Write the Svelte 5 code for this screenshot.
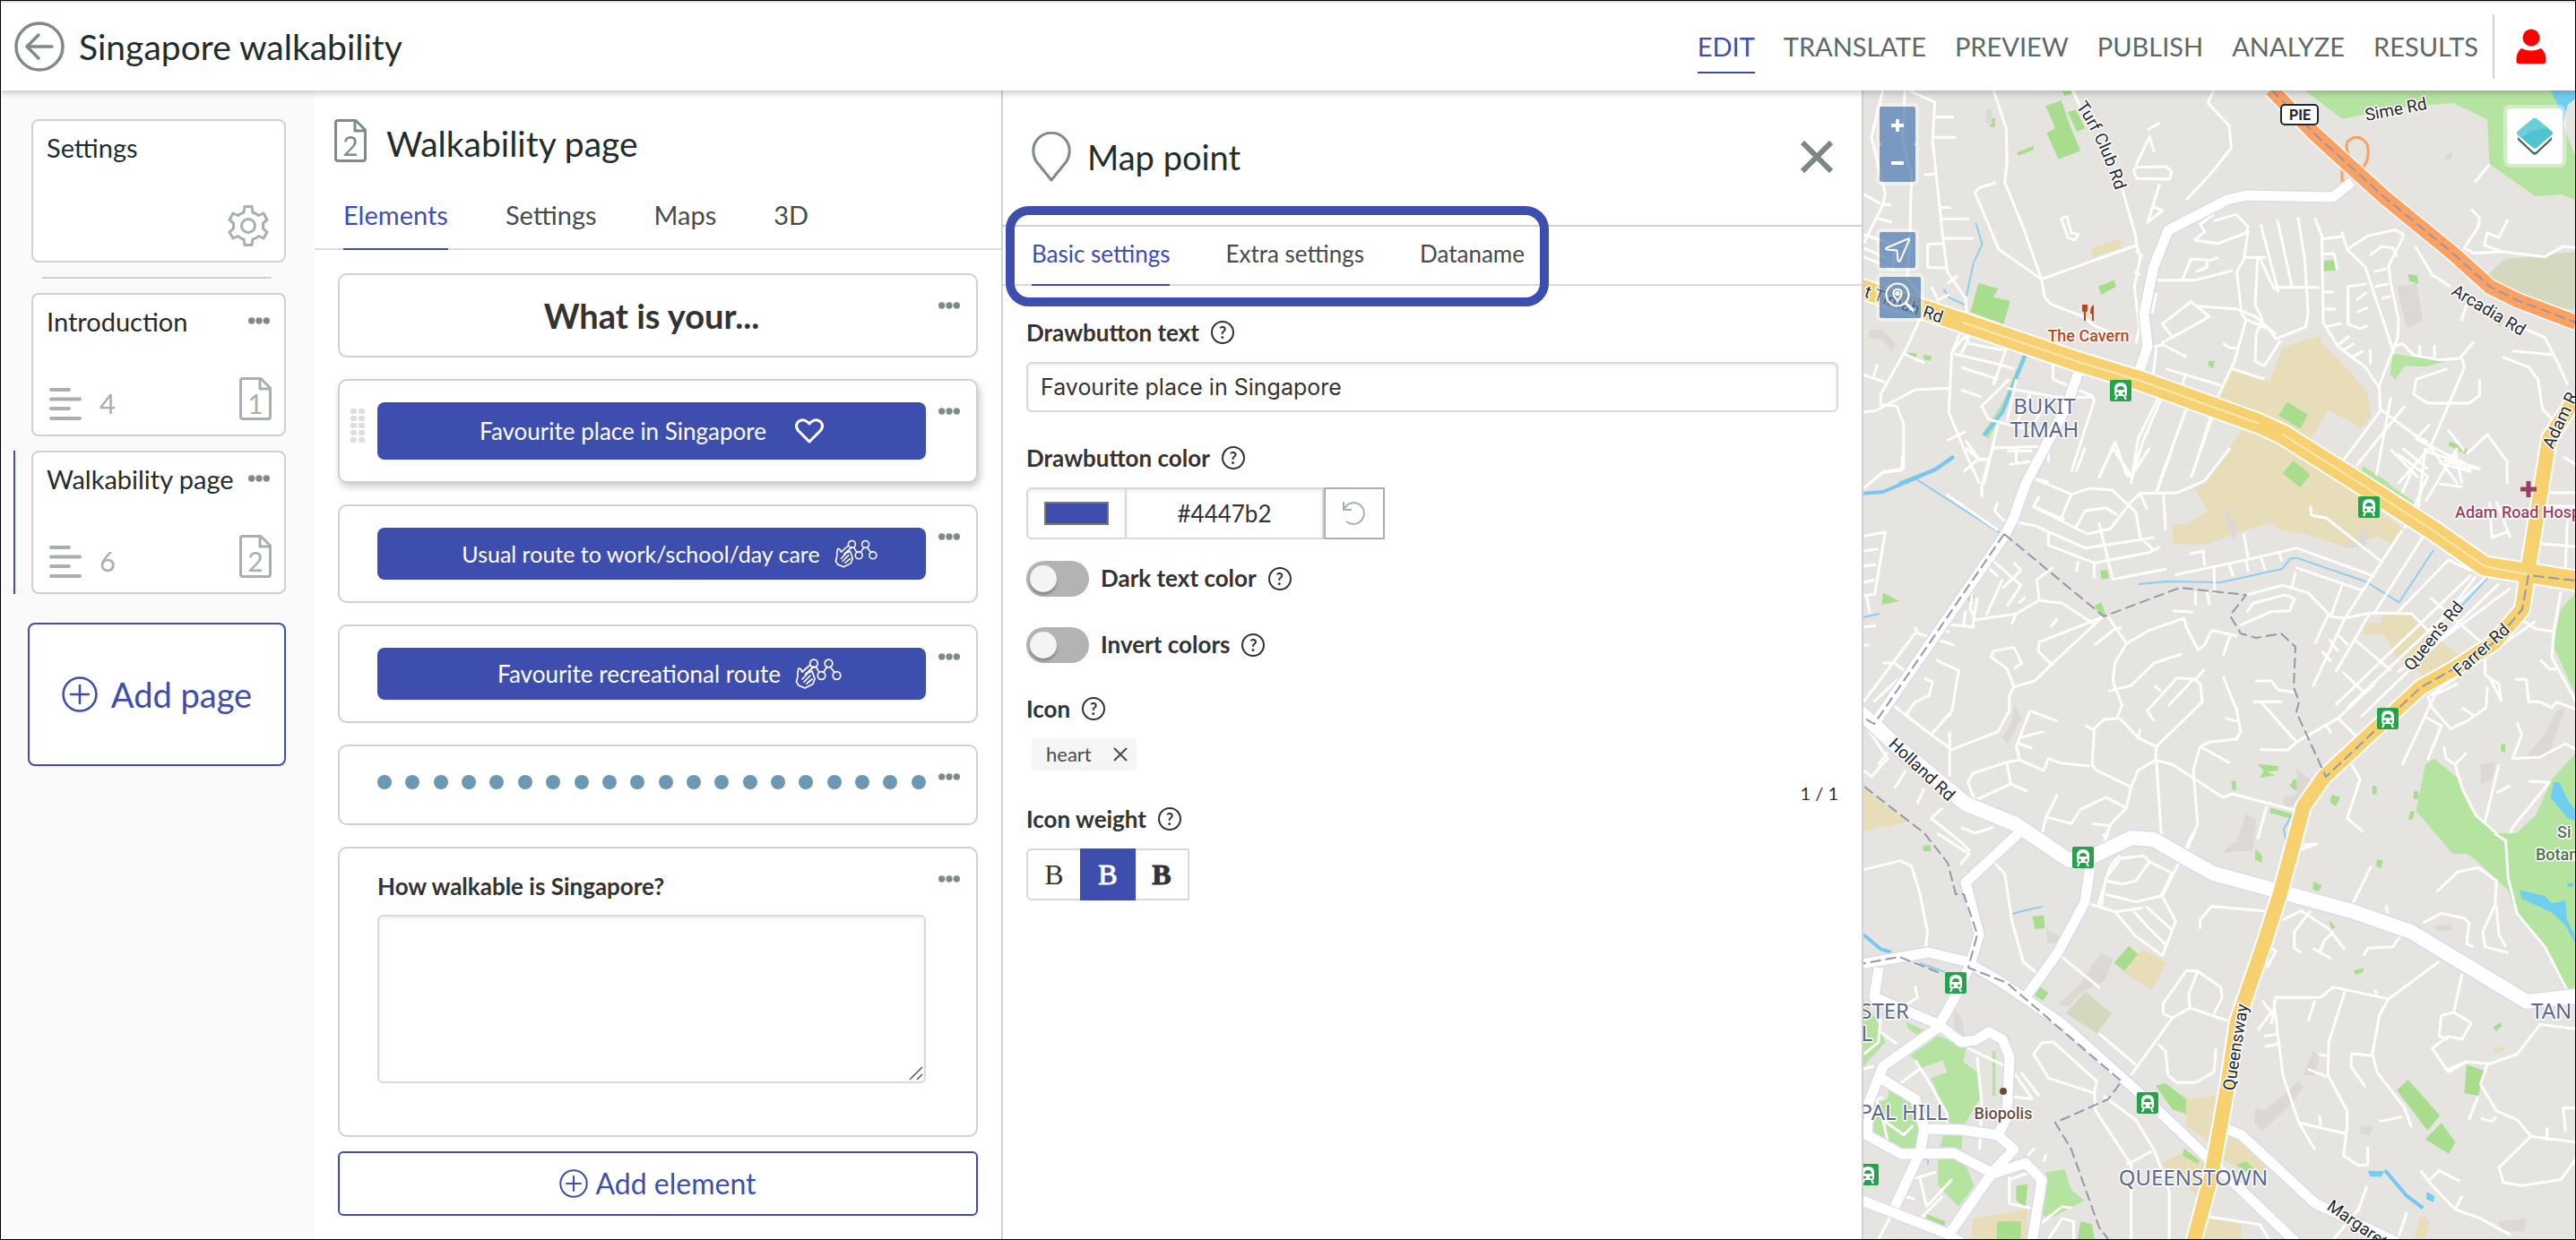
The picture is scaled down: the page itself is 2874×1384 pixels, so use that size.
<script lang="ts">
    const navItems = ["EDIT", "TRANSLATE", "PREVIEW", "PUBLISH", "ANALYZE", "RESULTS"];
    const pageTabs = ["Elements", "Settings", "Maps", "3D"];
    const elementTabs = ["Basic settings", "Extra settings", "Dataname"];
    const pages = [
        { title: "Introduction", count: 4, number: 1, active: false },
        { title: "Walkability page", count: 6, number: 2, active: true },
    ];

    let drawText = $state("Favourite place in Singapore");
    let swatch = $state("#3e4eae");
    let hex = $state("#4447b2");
    let darkText = $state(false);
    let invert = $state(false);
    let weight = $state("regular");
    let answer = $state("");

    const stations = [
        [287, 335], [564, 465], [585, 701], [245, 856], [103, 996], [317, 1130], [5, 1210],
    ];

    // The map is drawn in three stacked tiles, each with its own grid
    const tiles = [
        {
            name: "north",
            transform: "translate(-9 -11) scale(0.5128 0.3333)",
            parks: [
                "M975 30H1520L1545 170 1568 260V400L1535 380 1480 388 1380 280 1375 130 1300 75 1180 90 1060 128Z",
                "M1170 915 1285 940 1240 958 1195 955 1175 1000 1163 985Z",
                "M1105 1290 1165 1350H1095Z",
                "M365 915 375 920 330 1080 290 1200 275 1185 320 1080Z",
            ],
            greens: [
                "M414 85 448 66 468 155 490 235 442 263 416 175 435 160Z",
                "M462 105 480 98 500 160 482 172Z",
                "M268 678 311 697 300 725 337 738 322 815 250 775Z",
                "M528 690 563 668 567 690 535 717Z",
                "M352 240 388 218V232L355 251Z",
                "M940 1076 985 1118 968 1165 920 1122Z",
                "M950 1272 990 1320 965 1362 930 1315Z",
                "M1018 603 1045 600 1048 637H1018Z",
                "M1202 648 1222 652 1225 680 1205 672Z",
                "M1295 1208 1332 1236 1328 1250 1290 1222Z",
                "M293 125H304V155H293Z",
                "M115 910 135 915 130 930 113 925Z",
                "M148 918 165 922V937L150 935Z",
                "M768 940 782 938 778 965 768 955Z",
                "M1388 795 1410 800 1402 822Z",
                "M450 35H470V45L455 50Z",
            ],
            sand: [
                "M512 562 575 528 580 560 515 592Z",
                "M820 962 900 1010 930 890 1010 855 1015 880 1080 980 1115 1050 1122 1125 1100 1165 1030 1102 990 1198 1060 1350H760L840 1170 785 1065Z",
            ],
            grass: ["M1410 600 1568 572V768L1480 750 1365 665Z"],
            shade: [
                "M1180 690 1220 680 1235 800 1200 830 1185 740Z",
                "M1278 262 1298 232V255L1290 268Z",
                "M285 100 297 95 298 150 284 140Z",
                "M30 835 60 835 88 880 80 910 60 870 30 860Z",
            ],
            lakes: ["M1512 30H1568V60L1550 80 1540 145 1528 80Z"],
            streams: ["M262 475 276 548 257 610 242 720", "M192 698 205 727 237 750"],
            rivers: ["M370 915 320 1110 280 1188", "M214 1258 175 1302 95 1350"],
            lanes: [
                "M60 30 35 190 65 378 60 415 18 545 M60 415 78 415 M18 380 55 413 M45 460 80 475",
                "M108 30 103 200 122 320 118 560 112 660 155 745",
                "M115 33 173 72 168 200 190 520 200 640 240 730 243 790 210 910 203 1110 238 1240 270 1350",
                "M170 122 214 122M170 190 219 190M150 315 174 312M186 425 208 425M190 463 248 463M193 528 256 528",
                "M193 545 157 548V625L197 628M200 680 222 655M165 690 180 735 205 715",
                "M300 30 328 160 330 270 325 340 365 490 405 665 412 725 425 748 495 790 520 820 565 850 600 870",
                "M305 342 268 360 260 375 312 565 405 665M405 665 610 552",
                "M472 30 490 90M578 350 610 520 612 552 620 590 607 690 618 830 610 880",
                "M610 570 625 590M607 640 620 650M655 710 645 780",
                "M610 285 640 188 650 240M635 165 662 142M612 290 675 287 688 305 683 330 612 328 605 300Z",
                "M662 345 635 480M645 420 668 435 640 470",
                "M448 462 460 455 470 510 485 515 478 535 462 525Z",
                "M780 30 767 75 813 150 818 225 780 300 720 400",
                "M780 448 750 480 760 505 738 535 790 545 850 510 855 490 828 448 780 470",
                "M855 500 845 600 830 640 840 780 850 800 900 832 915 865 980 825 985 780 978 600 963 458",
                "M655 668H740L820 636M712 665 730 598 765 600 765 625 740 640M765 605 790 592",
                "M882 482 920 705 915 692H1010M918 465 950 690M880 595 912 700M845 592H893M875 595 870 750 885 800 872 850 870 940 890 955 925 870",
                "M730 740 668 815 690 860 770 790ZM650 890 670 885 720 925M665 880 760 800M745 755 830 765 870 790 915 850",
                "M850 800 825 940 785 1070 735 1310M820 965 890 1000M800 880 815 895H830",
                "M1000 460 1015 520 1018 810 1050 890 1110 960 1140 1030 1142 1100 1250 1225 1310 1350",
                "M1015 530 1060 522M1058 505 1070 565 1110 625 1130 720 1165 880 1172 915",
                "M1070 565 1115 520 1175 500 1192 515 1190 530 1160 620 1165 680 1182 800 1180 860 1140 1020V1040",
                "M1120 585 1145 555 1170 560 1178 590M1128 640 1155 630M1130 690 1160 680M1145 730 1165 722M1018 580H1042L1048 635M1018 708H1040M1018 765H1045M1020 825 1058 813",
                "M1112 680 1072 690V815L1098 830 1115 820M1090 735 1112 710M1090 775 1115 760",
                "M1050 885 1075 855M1065 900 1085 880M1082 925 1105 905M1120 950V900M1172 890 1190 880 1215 920 1270 935 1315 930 1345 875M1228 885V920M1260 885V935",
                "M1320 930 1325 960 1295 1070 1250 1230 1180 1350",
                "M1288 965 1220 1000 1215 1050 1245 1080 1335 1080 1358 1055V1000",
                "M1145 1100 1060 1275M1195 1090 1090 1290M1165 1060 1130 1350M1245 1210 1210 1180M1250 1150 1220 1200 1350 1300",
                "M1218 555 1255 650 1295 690M1330 750 1318 805M1440 820 1500 860 1530 950 1550 1020",
                "M1340 430 1358 460 1355 490 1325 560 1345 578 1405 572 1500 590 1540 555 1568 560M1420 465 1400 525 1375 510 1368 550 1405 572",
                "M1380 280 1348 340M1430 905 1520 918M1408 925 1465 960 1485 1000 1495 1100 1520 1140",
                "M18 515 75 545M18 560 75 600M18 590 85 632M85 545 82 640",
                "M155 745 140 800 110 900 55 1050V1085L90 1090 105 1150V1300L60 1310 30 1350M18 1110 45 1105 130 1035 205 1030",
                "M105 915 150 945M48 950 40 990M18 985 65 1010",
                "M240 850 210 910M250 850 230 915M215 915 300 945 345 965M245 880 330 905M330 890 300 1020M230 960 310 1000M230 1035 275 1060",
                "M335 1000 275 1090 290 1135 410 1180M330 1030 440 1060 515 1060M430 940 430 1000 515 1055 520 1070 470 1310",
                "M245 840 240 870M350 1000 330 1140M380 1050 350 1150M415 1080 380 1170M300 1230 410 1225M240 1175 200 1205M240 1205 270 1270 290 1270",
                "M280 1350 310 1150M335 1285 385 1275M350 1230V1280M385 1330 420 1345M420 1225V1280",
                "M600 1350 615 1200 660 1060M530 1330 565 1210 590 1320 603 1325 625 1210 665 1068M660 1350 720 1100M730 1330 785 1090",
                "M655 890 648 990M675 965 795 1020M720 980 700 1065",
                "M1330 1250 1375 1185 1418 1275V1350M1305 1240 1320 1350M1290 1170 1325 1240M1240 1240 1360 1300M1190 1230 1245 1300M1165 1235 1225 1330",
                "M1540 1260 1568 1285M1270 1280 1340 1310",
            ],
        },
        {
            name: "middle",
            transform: "translate(-9 399) scale(0.5128 0.3333)",
            parks: [
                "M1260 1040 1310 1105 1340 1210 1420 1315 1480 1230 1515 1110 1568 1020V1360H1300L1220 1215 1240 1060Z",
                "M1568 485V830L1518 660 1535 540Z",
                "M1105 62 1215 180 1212 195 1098 82Z",
            ],
            greens: [
                "M60 485 96 512 58 525Z",
                "M250 485 260 495 250 517 240 500Z",
                "M533 412 548 408 552 435 535 440Z",
                "M520 530 535 515 545 560 535 562Z",
                "M953 42 990 90 967 132 930 85Z",
                "M875 1058 920 1065 920 1080 895 1085 915 1095 880 1105 888 1080Z",
                "M1037 1160 1055 1170 1045 1200 1032 1185Z",
                "M1125 1132H1134V1160H1125Z",
                "M1405 990H1414V1018H1405Z",
                "M818 1115H828V1145H820Z",
                "M903 1205 950 1225 945 1240 902 1222Z",
                "M955 1108 968 1125 958 1148 945 1130Z",
                "M1215 1150H1225V1175H1214Z",
                "M1208 1215 1217 1218 1212 1245 1203 1243Z",
                "M147 1335 162 1330 165 1350H148Z",
            ],
            sand: [
                "M820 0H960L1190 270 1165 322 1135 297 1065 333 985 290 925 275 905 250 830 285 765 323H690V255H722L767 210 738 140 780 90Z",
                "M1145 557H1215L1245 610 1320 705 1240 765 1175 695 1150 625H1105V585H1145Z",
                "M18 1140 115 1250 18 1285Z",
            ],
            grass: [],
            shade: [
                "M800 190 830 265 825 310 810 270Z",
                "M345 860 362 905 330 990 320 970 340 920Z",
                "M1100 265 1115 285 1110 330 1065 335V318L1095 308Z",
                "M1525 880 1545 870 1520 975 1510 1030 1455 1040 1500 960Z",
                "M1360 1060 1392 1050 1385 1110 1362 1125Z",
                "M850 1225 872 1245 865 1350H800L830 1320Z",
                "M960 1075 990 1110 975 1190 935 1200 930 1170 960 1160Z",
            ],
            lakes: ["M1520 1118 1532 1120 1550 1180 1568 1215V1250L1550 1240 1512 1170Z"],
            streams: [
                "M130 102 318 288",
                "M615 456 680 447 795 450 928 405 947 370 960 368 1110 447 1183 517 1258 342",
                "M1375 437 1312 540",
                "M952 1225 932 1275 938 1320",
                "M18 567 52 555",
            ],
            rivers: ["M0 154 60 147 130 102 175 70 213 30"],
            lanes: [
                "M18 135 60 82 100 75 105 0M235 80 268 36 290 40 300 0M268 36 240 0M290 40 275 130V165",
                "M385 100 470 155 510 135 560 142 610 215 620 300 648 340M470 155 445 245M400 162 388 195 455 240M310 182 303 210 320 240 390 260 500 335 650 300",
                "M385 195 505 288 555 270 600 180 620 152 700 150 760 110 815 0M480 265 500 210 545 200 570 225M620 155 635 205M670 155 675 275M655 150 690 0",
                "M420 285V325L520 385 640 350 663 330M485 380 480 415M520 385V435M530 250 560 440 677 405",
                "M198 155 310 275M18 295 65 282 42 490 18 495M18 345 50 338M18 395 45 390M18 450 42 442M25 500 32 555",
                "M695 425 850 375 960 335 1130 430M727 355 757 345 760 395M845 288 855 370M780 398 782 490M812 385 822 430M850 375 855 415M882 362 892 410M922 352 928 380M958 400 1105 478M958 415 950 465",
                "M850 492 930 460 985 485 1035 565 1065 570 1120 552 1210 555 1245 610",
                "M835 595 905 548 945 545 955 505 935 492 865 520 852 550",
                "M1060 455 1035 560M1065 570 995 800M1120 552 1045 750M1000 655 1030 555M1050 625 1072 660M1030 640 1050 680M1015 680 1035 715",
                "M1190 275 1065 570M1240 285 1130 550M1290 375 1180 550M1340 425 1045 860M1370 435 1070 870M1400 455 1100 900",
                "M1425 470 1180 750M1480 580 1250 830M1250 500 1365 655M1350 430 1300 530M1085 640 1165 745M1060 750 1105 815M1290 375 1340 410",
                "M990 195 992 225 1025 235 1148 385",
                "M300 378 360 460 330 530M345 385 360 410 320 470M285 395 310 430M255 470 250 540 262 575 350 555 400 510 395 440 430 400M400 510 450 520 520 590",
                "M350 555 340 590M320 440 285 560M370 500 355 520M265 500 255 600M240 545 235 600M200 590 260 600",
                "M130 600 135 620 215 660M130 620 18 850M205 615 175 610M18 600 45 595M18 660 30 660",
                "M550 565 590 655 565 720 560 780 580 860 570 905 540 910 520 940 515 1060 525 1080 600 1135 590 1205 555 1260 540 1330",
                "M540 565 400 650 398 680 430 730M440 570 425 600M535 570 430 720 390 780 345 800 330 740 295 700 300 680 345 668 362 720 345 740",
                "M345 800 335 830V880L310 950 210 1010 165 960 85 865M205 950 205 1100M210 890 195 905",
                "M175 710 225 745 210 880 165 960M150 770 168 785 160 830 130 850 110 895M60 720 85 720 110 750 40 850",
                "M590 655 640 610 715 570 720 600 745 675 760 660 775 610 830 630M560 610 580 600M520 660 570 600M690 545 735 550M740 480V525M765 480 770 525M815 630 800 695",
                "M550 815 600 795 650 720 710 690M735 775 680 865M760 740 740 775 700 770 635 880 650 915M650 795 665 815",
                "M575 905 615 970 655 1000 755 850 750 790 735 770M655 1000 653 1045 615 1080 600 1135M653 1045 690 1060 800 1170 820 1158 960 1215",
                "M800 765 830 880 838 950 830 975 770 985 750 1000 735 1080 745 1260 720 1350M750 1000 815 1055M655 1050 668 1350M805 905 830 915",
                "M380 880 440 915M380 880 350 1000 358 1045M358 970 410 950M355 990 385 1005M358 1045 330 1052 255 1090 245 1120 260 1180M330 1055 338 1125 260 1180M338 1125 375 1150",
                "M358 1045 410 1080 420 1040 445 1055 510 1065M440 1160 415 1235 405 1300M415 1235 470 1258 490 1210 545 1170 590 1205M515 1258 555 1265",
                "M500 930 520 945M620 940 615 970M870 780 905 780 920 810 955 818M865 850H928M885 855 960 985M880 1010 940 1012 965 980 1050 905 1130 790M1025 930 1035 955M1050 905 1090 965",
                "M895 1200 875 1310M1080 1060 1098 1110 1070 1240 1105 1285M970 1330 1005 1325M190 1205 165 1240 230 1320 250 1350M230 1270 260 1290 300 1270",
                "M18 920 70 1040 35 1100 18 1080M70 1020 50 1060M150 1140 135 1190M110 1080 85 1140",
                "M1245 830 1255 870 1295 940 1330 915 1372 870 1375 800M1260 830 1190 1060M1240 900 1275 930 1245 1045M1310 790 1255 830M1320 870 1345 895",
                "M1380 770 1405 845 1400 790 1370 760 1370 680M1450 575 1480 605 1520 615 1515 700 1568 850M1535 480 1520 610",
                "M1435 775 1460 775 1465 850 1490 850 1515 870 1525 850 1568 875M1440 920 1450 960 1430 1040 1490 1035 1545 990 1568 1010",
                "M1280 1000 1285 1040 1305 1060 1330 1020M1305 1060 1320 1140 1350 1230 1410 1310 1430 1350M1395 1155 1425 1130M1465 1115 1510 1120 1430 1270 1410 1350M1400 1060 1370 1250",
                "M1380 180 1385 300 1418 280M1395 180 1425 300M1500 150H1568M1500 195H1568M1490 320 1568 330M1550 210 1545 400M1490 710 1510 740H1530",
                "M1240 0 1225 200M1310 0 1240 180M1215 60 1190 150M1180 20 1245 95 1195 270M1280 40 1340 72M1270 120 1320 130",
                "M385 10H330M560 0 600 95 640 0M480 80 500 0M530 100 560 0",
            ],
        },
        {
            name: "south",
            transform: "translate(-9 829) scale(0.5128 0.3333)",
            parks: [
                "M1268 0H1568V530H1545L1500 380 1440 280 1420 190 1350 90Z",
                "M180 678 240 720 235 765 265 800 270 890 235 980 230 1070 258 1180 225 1250 180 1180V1080L200 950 165 820 200 800 190 760 145 785 120 745Z",
                "M18 560 45 620 65 700 18 780Z",
                "M75 850 120 880 140 960 130 1058 80 1055 30 1010 35 910 70 890Z",
                "M110 630 150 660 140 680 115 655Z",
                "M415 1135 455 1125 470 1195 498 1230 430 1285 405 1280Z",
                "M298 730H305V880H298Z",
            ],
            greens: [
                "M1202 825 1272 945 1245 995 1178 860Z",
                "M1275 970 1305 1035 1292 1073 1240 1025Z",
                "M1330 775 1368 795 1355 880 1325 870Z",
                "M653 845 675 838 720 890V940L690 925Z",
                "M595 377 615 405 585 460 562 435Z",
                "M385 278 410 275 412 318 390 320Z",
                "M388 540 400 512 420 535 408 560Z",
                "M308 1300H360V1360H308Z",
                "M490 1300 515 1310 520 1360H483Z",
                "M1085 460 1105 450V465L1088 475Z",
                "M997 162 1015 175 1008 195 995 188Z",
                "M870 52 885 75V98L870 90Z",
                "M1135 88 1148 92 1143 118 1133 110Z",
                "M1030 290 1045 315 1035 320Z",
                "M1388 650 1403 632 1407 645 1395 662Z",
                "M350 1180 375 1175 370 1250 350 1230Z",
                "M715 1055 748 1095 745 1108 712 1080Z",
                "M830 1110 850 1098 872 1130 862 1150Z",
                "M147 42 163 40V58L148 60Z",
                "M155 1275 195 1300V1315L155 1290Z",
            ],
            sand: [
                "M625 388 678 432 645 525 580 465Z",
                "M720 890 785 878 775 1040 720 980Z",
                "M815 1005 895 1115 880 1160 800 1095Z",
                "M665 1105 720 1065 765 1110 745 1215Z",
                "M255 1290 375 1258V1360H252Z",
                "M765 1285 840 1310V1360H755Z",
                "M1230 1278 1250 1300 1240 1360H1215Z",
                "M1388 722 1418 712 1410 728 1392 738Z",
            ],
            grass: ["M500 530 558 603 525 670 458 603Z"],
            shade: [
                "M535 400 560 420 545 490 485 540 465 580 440 575 490 500Z",
                "M215 590 232 620 240 700 215 680Z",
                "M870 920 890 925 930 880 965 830 975 850 940 920 885 1000 868 970Z",
                "M995 730 1010 745 1000 810 975 810Z",
                "M820 35 855 10 850 50 800 70Z",
                "M1100 978 1127 985 1118 1012 1095 1005Z",
                "M1400 1300 1460 1290 1455 1335 1405 1330Z",
                "M1258 310 1297 305V325L1265 328Z",
                "M415 320 450 350 445 370 418 365Z",
            ],
            lakes: [
                "M1445 190 1500 210 1515 235 1545 225 1548 290 1565 340V365L1545 310 1515 265 1450 220Z",
                "M1115 1130 1150 1132 1145 1150H1120Z",
                "M1243 1200 1260 1215 1258 1235 1242 1225Z",
                "M1548 168 1563 165V180H1550Z",
            ],
            streams: ["M342 270 365 260 408 245", "M140 435 195 465", "M140 1115 143 1092H158V1110"],
            rivers: ["M1152 1128 1200 1215 1235 1255", "M18 340 55 388 78 398"],
            lanes: [
                "M18 122 98 92 122 110 140 200 157 330 153 385M178 0 248 70 228 105",
                "M300 95 325 135 340 290 365 430 395 468M540 0 545 25",
                "M575 75 555 110 528 240M575 90 545 150 535 245M628 75 575 85M628 75 640 95 690 135M640 95 610 160 580 170 548 160M690 130 665 210 610 230 545 205M735 0 668 210",
                "M510 237 565 263 610 345 668 410 697 295 668 212M565 263 625 250M605 260 640 320 680 380M632 245 690 325",
                "M450 415 532 518M750 320V290L775 245 890 260",
                "M745 462 725 540 728 585 810 628M728 585 690 618 670 605V570L720 460 745 462 795 515 798 550 780 605M690 618 600 810",
                "M658 705 675 730 680 810 700 835 740 835 780 800 785 720M530 670 610 775",
                "M405 702 388 740 420 820 520 870 525 830 430 698ZM520 870 523 930 600 1110V1360M540 880 610 960 650 1060 683 1200V1360M590 1110 645 1065",
                "M130 510 135 550 105 580M18 740 50 700 55 620M50 660 90 705",
                "M245 720 340 790 385 890M265 750 275 900 270 1060M385 890 330 880M130 760 155 820 200 940V980M95 840 140 790M60 885 45 890 60 960 105 1010 125 980M60 960 70 1030",
                "M120 1160 175 1135M140 1150 155 1250 210 1160M105 1215 130 1225M85 1260 50 1360M190 1215 145 1285M335 1150V1240L380 1255M335 1160 400 1125M410 1100 415 1075M405 1305 450 1250 470 1255M420 1360 450 1290 475 1300V1360",
                "M930 290 970 260 1030 320 1065 390M990 260 955 330V385L970 400M1040 330 1020 360 1010 400M900 380 915 395 895 450M995 385 1035 420",
                "M890 260 925 270M1105 410 1115 385 1170 380 1185 345M1082 235 1100 180 1122 110M1155 240 1158 270M968 55 1005 35",
                "M905 640 915 550H1012L1040 515 1160 555 1270 430M1130 525 1135 540M910 560 930 810 965 970 1000 1060M965 970 1065 1005M1065 530 1030 700 1028 810 1070 930V980L1062 1080 1095 1112 1115 1110V1050M1000 560 985 630",
                "M885 560 905 600 875 660M890 680 920 672M890 715 922 705M1008 740 1025 745M985 790 1025 815M1160 555 1140 610 1125 740 1135 800 1195 920 1210 985M1125 745 1080 738 1078 780 1110 850M1140 965 1190 950M1010 945 1012 980",
                "M1320 470 1302 600 1275 610 1270 680 1290 690M1302 600 1340 635 1320 690 1290 680 1255 720 1290 800 1330 765 1380 772 1440 740 1490 640 1568 655M1330 765 1290 790",
                "M1375 775 1360 840 1395 930 1440 960 1470 1015 1400 1120 1410 1170 1450 1180 1535 1160 1568 1090M1355 880 1335 960M1470 1015 1568 1035M1360 955 1385 965 1395 950M1545 1000 1540 920H1568M1505 985V1030",
                "M1265 195 1310 130 1355 115 1395 160 1392 240 1365 330 1370 380 1420 400M1235 300 1275 268 1325 285 1335 300 1330 370 1345 380M1310 405 1318 460M1395 245 1400 340 1415 380",
                "M1390 0 1415 25 1420 150 1440 270 1500 380 1550 530M1230 1130 1255 1180 1305 1260 1360 1290 1425 1345M1250 1160 1270 1130 1315 1165M1320 1215 1305 1260M1113 1180 1095 1260 1040 1360M1200 1270 1180 1360",
                "M770 1285 880 1310 900 1360M400 880 360 800M18 790 40 780M375 1080 390 1055",
            ],
        },
    ];

    // Through roads, in map units
    const avenues = [
        "M545 102 524 119 427 117 406 122 340 156 324 196 313 249 317 286 306 318",
        "M240 314 227 352 181 439 168 476 158 496 12 707",
        "M173 829 114 884 129 942 119 976 103 1010 83 1046 22 1089 6 1129 4 1166 42 1187 101 1186 145 1209",
        "M-9 976 73 962 114 972 155 996 222 1042 319 1129 483 1286",
        "M253 866 247 906 217 962 183 1009",
        "M17 979 12 1012 83 1042 109 1062 125 1060 140 1051 155 1059 163 1079 160 1146 150 1166",
        "M17 1101 58 1126 68 1159 63 1186 35 1246",
        "M70 1159 110 1160 150 1166 168 1182 145 1206 96 1276",
        "M-9 1236 94 1276 115 1290",
        "M145 1209 181 1197 199 1216 188 1286",
        "M406 1159 422 1166 504 1242 596 1286",
    ];
    const holland =
        "M-9 689 42 736 114 796 170 819 229 859 253 856 299 834 324 836 360 857 391 874 545 916 611 939 740 1017 795 1011";
    const bukitTimah = "M-9 219 111 259 237 302 309 324 442 372 468 384 555 439 637 492 693 531 795 547";
    const queensway =
        "M795 342 765 389 760 420 742 532 735 579 704 616 658 646 622 666 514 766 491 799 483 829 465 896 447 952 417 1039 406 1112 388 1212 368 1286";
    const expressway = "M455 -1 504 49 581 119 658 182 699 219 729 234 795 259";
    const borders = [
        "M157 495 268 587 353 555 427 563 409 586 421 606 438 611 466 606 482 621 480 666 486 682 483 694 516 766 622 666 658 646 704 616 735 579 742 541 795 547",
        "M157 495 12 707-9 695",
        "M1 777 68 829 94 862 103 897 112 897 127 942 117 979 160 996 288 1106 273 1126 214 1152 232 1182 263 1269 273 1282",
        "M-9 976 40 967 88 986",
    ];
</script>

{#snippet more()}
    <button type="button" class="more" aria-label="More">
        <svg viewBox="0 0 26 8" width="24" height="8" fill="currentColor" aria-hidden="true">
            <circle cx="4" cy="4" r="4" />
            <circle cx="13" cy="4" r="4" />
            <circle cx="22" cy="4" r="4" />
        </svg>
    </button>
{/snippet}

{#snippet help()}
    <button type="button" class="help" aria-label="Help">?</button>
{/snippet}

{#snippet fileIcon(n: number)}
    <svg class="file-icon" viewBox="0 0 36 48" width="36" height="48" fill="none" stroke="currentColor" stroke-width="3" stroke-linejoin="round">
        <path d="M24 1.500H4Q1.500 1.500 1.500 4V44Q1.500 46.500 4 46.500H32Q34.500 46.500 34.500 44V12Z" />
        <path d="M23 2V13H34" />
        <text x="18" y="41" text-anchor="middle" stroke="none" fill="currentColor">{n}</text>
    </svg>
{/snippet}

{#snippet plusIcon(size: number)}
    <svg viewBox="0 0 38 38" width={size} height={size} fill="none" stroke="currentColor" stroke-width="2.400" stroke-linecap="round" aria-hidden="true">
        <circle cx="19" cy="19" r="17.500" />
        <path d="M19 9.500V28.500M9.500 19H28.500" />
    </svg>
{/snippet}

{#snippet routeIcon(width: number)}
    <svg viewBox="0 0 52 34" {width} height="34" fill="none" stroke="currentColor" stroke-width="1.700" stroke-linecap="round" stroke-linejoin="round" aria-hidden="true">
        <path d="M17 7 8 15 7 13Q7 11 4 11Q2.500 16 3 20L1.500 26 4 30 11 33 20 28.500 22 22.500 19 14 11.500 17.500 21 9" />
        <path d="M8 23 13 18M10 26 17 19M13 28 19 23" />
        <circle cx="21" cy="5.500" r="4.300" />
        <circle cx="29.500" cy="19" r="4.300" />
        <circle cx="37.500" cy="5.500" r="4.300" />
        <circle cx="46.500" cy="19" r="4.300" />
        <path d="M23.500 9.500 27 15.500M31.500 15.500 35.500 9.500M39.500 9.500 44 15.500" />
    </svg>
{/snippet}

{#snippet grip(visible: boolean)}
    <svg class="grip" viewBox="0 0 16 50" width="16" height="50" fill="#dcdfde" aria-hidden="true">
        {#if visible}
            {#each [0, 1, 2, 3, 4] as row}
                <rect x="0" y={7 + row * 8} width="7" height="6" rx="2" />
                <rect x="9" y={7 + row * 8} width="7" height="6" rx="2" />
            {/each}
        {/if}
    </svg>
{/snippet}

<div class="app">
    <header class="topbar">
        <a href="#back" class="back" aria-label="Back">
            <svg viewBox="0 0 56 56" width="56" height="56" fill="none" stroke="currentColor" stroke-width="3.500" stroke-linecap="round" stroke-linejoin="round">
                <circle cx="28" cy="28" r="26" />
                <path d="M42 28H15M27 15 14 28 27 41" />
            </svg>
        </a>
        <h1>Singapore walkability</h1>
        <nav class="main-nav">
            {#each navItems as item, i}
                <a href="#{item}" class:current={i === 0}>{item}</a>
            {/each}
        </nav>
        <button type="button" class="user" aria-label="Account">
            <svg viewBox="0 0 34 40" width="34" height="40" fill="#f00">
                <circle cx="17" cy="10" r="9.500" />
                <path d="M6 22Q17 27 28 22Q34 26 33.500 37Q33 39 31 39H3Q1 39 .5 37Q0 26 6 22Z" />
            </svg>
        </button>
    </header>

    <div class="workspace">
        <aside class="sidebar">
            <a href="#settings" class="page-card">
                <span class="page-title">Settings</span>
                <svg class="gear" viewBox="0 0 46 46" width="46" height="46" fill="none" stroke="currentColor" stroke-width="3" stroke-linejoin="round">
                    <path d="M19 1.500H27L28 8Q32 9.500 34.500 11.500L40 9 44 16.500 39.500 20V26L44 30 40 37 34.500 34.500Q32 37 28 38L27 44.500H19L18 38Q14 37 11.500 34.500L6 37 2 30 6.500 26V20L2 16.500 6 9 11.500 11.500Q14 9.500 18 8Z" />
                    <circle cx="23" cy="23" r="7.500" />
                </svg>
            </a>
            <hr />
            {#each pages as page}
                <div class="page-slot" class:active={page.active}>
                    <div class="page-card">
                        <div class="page-head">
                            <span class="page-title">{page.title}</span>
                            {@render more()}
                        </div>
                        <div class="page-foot">
                            <svg viewBox="0 0 36 36" width="36" height="36" stroke="currentColor" stroke-width="4" stroke-linecap="round">
                                <path d="M2 2H22M2 12.500H34M2 23H22M2 34H34" />
                            </svg>
                            <span class="count">{page.count}</span>
                            {@render fileIcon(page.number)}
                        </div>
                    </div>
                </div>
            {/each}
            <button type="button" class="add-page">{@render plusIcon(40)} Add page</button>
        </aside>

        <section class="elements">
            <div class="panel-title">
                {@render fileIcon(2)}
                <h2>Walkability page</h2>
            </div>
            <nav class="tabs page-tabs">
                {#each pageTabs as tab, i}
                    <a href="#{tab}" class:current={i === 0}>{tab}</a>
                {/each}
            </nav>
            <div class="cards">
                <article class="card">
                    {@render grip(false)}
                    <h3 class="body">What is your...</h3>
                    {@render more()}
                </article>
                <article class="card selected">
                    {@render grip(true)}
                    <button type="button" class="draw body tall">
                        Favourite place in Singapore
                        <svg viewBox="0 0 32 28" width="32" height="28" fill="none" stroke="currentColor" stroke-width="3" stroke-linejoin="round" aria-hidden="true">
                            <path d="M16 26 3.500 13.500Q-.5 8 3.500 3.800Q9-.5 14 4L16 6 18 4Q23-.5 28.500 3.800Q32.500 8 28.500 13.500Z" />
                        </svg>
                    </button>
                    {@render more()}
                </article>
                <article class="card">
                    {@render grip(false)}
                    <button type="button" class="draw body route long">
                        Usual route to work/school/day care
                        {@render routeIcon(48)}
                    </button>
                    {@render more()}
                </article>
                <article class="card">
                    {@render grip(false)}
                    <button type="button" class="draw body route">
                        Favourite recreational route
                        {@render routeIcon(52)}
                    </button>
                    {@render more()}
                </article>
                <article class="card">
                    {@render grip(false)}
                    <div class="body dots">
                        {#each Array(20) as _}
                            <span></span>
                        {/each}
                    </div>
                    {@render more()}
                </article>
                <article class="card">
                    {@render grip(false)}
                    <div class="body question">
                        <label for="answer">How walkable is Singapore?</label>
                        <div class="answer-box">
                            <textarea id="answer" bind:value={answer}></textarea>
                            <svg viewBox="0 0 16 16" width="16" height="16" stroke="#555" stroke-width="1.500" aria-hidden="true">
                                <path d="M1 15 15 1M9 15 15 9" />
                            </svg>
                        </div>
                    </div>
                    {@render more()}
                </article>
                <button type="button" class="add-element">{@render plusIcon(32)} Add element</button>
            </div>
        </section>

        <section class="inspector">
            <div class="inspector-head">
                <svg viewBox="0 0 44 56" width="44" height="56" fill="none" stroke="#7f8b89" stroke-width="3" stroke-linejoin="round">
                    <path d="M22 54 5 33Q2 28 1.800 21A20 19.500 0 0 1 42.200 21Q42 28 39 33Z" />
                </svg>
                <h2>Map point</h2>
                <button type="button" class="close" aria-label="Close">
                    <svg viewBox="0 0 36 36" width="36" height="36" stroke="currentColor" stroke-width="6">
                        <path d="M2 2 34 34M34 2 2 34" />
                    </svg>
                </button>
            </div>
            <div class="tab-strip">
                <nav class="tabs element-tabs">
                    {#each elementTabs as tab, i}
                        <a href="#{tab}" class:current={i === 0}>{tab}</a>
                    {/each}
                </nav>
            </div>
            <form class="form">
                <div class="label-row">
                    <label for="draw-text">Drawbutton text</label>
                    {@render help()}
                </div>
                <input id="draw-text" class="text-input" type="text" bind:value={drawText} />

                <div class="label-row spaced">
                    <label for="draw-color">Drawbutton color</label>
                    {@render help()}
                </div>
                <div class="color-group">
                    <div class="swatch-cell">
                        <input id="draw-color" type="color" bind:value={swatch} />
                    </div>
                    <input class="hex" type="text" aria-label="Color code" bind:value={hex} />
                    <button type="button" class="reset" aria-label="Reset color">
                        <svg viewBox="0 0 26 26" width="26" height="26" fill="none" stroke="currentColor" stroke-width="2">
                            <path d="M1 0V9H10M1.500 8.500Q5 1 13 1A12 12 0 1 1 4 22" />
                        </svg>
                    </button>
                </div>

                <div class="toggle-row">
                    <input id="dark-text" type="checkbox" role="switch" bind:checked={darkText} />
                    <label for="dark-text">Dark text color</label>
                    {@render help()}
                </div>
                <div class="toggle-row">
                    <input id="invert" type="checkbox" role="switch" bind:checked={invert} />
                    <label for="invert">Invert colors</label>
                    {@render help()}
                </div>

                <div class="label-row spaced">
                    <span class="label">Icon</span>
                    {@render help()}
                </div>
                <div class="tag">
                    heart
                    <button type="button" aria-label="Remove heart">
                        <svg viewBox="0 0 16 16" width="16" height="16" stroke="currentColor" stroke-width="2">
                            <path d="M1 1 15 15M15 1 1 15" />
                        </svg>
                    </button>
                </div>
                <p class="counter">1 / 1</p>

                <div class="label-row">
                    <span class="label">Icon weight</span>
                    {@render help()}
                </div>
                <div class="weights">
                    {#each ["light", "regular", "bold"] as w}
                        <button type="button" class={w} class:on={weight === w} aria-label={w} onclick={() => (weight = w)}>B</button>
                    {/each}
                </div>
            </form>
        </section>

        <section class="map" aria-label="Map">
            <svg class="map-canvas" viewBox="0 0 794 1282" preserveAspectRatio="xMinYMin slice">
                <rect width="794" height="1282" fill="#e5e4e1" />
                {#each tiles as tile (tile.name)}
                    <g transform={tile.transform}>
                        <path class="sand" d={tile.sand.join("")} />
                        <path class="park" d={tile.parks.join("")} />
                        <path class="grass" d={tile.grass.join("")} />
                        <path class="green" d={tile.greens.join("")} />
                        <path class="shade" d={tile.shade.join("")} />
                        <path class="lake" d={tile.lakes.join("")} />
                        <path class="stream" d={tile.streams.join("")} />
                        <path class="river" d={tile.rivers.join("")} />
                        <path class="lane" d={tile.lanes.join("")} />
                    </g>
                {/each}

                <path class="avenue-edge" d={avenues.join("")} />
                <path class="avenue-edge wide" d={holland} />
                <path class="avenue" d={avenues.join("")} />
                <path class="avenue wide" d={holland} />
                <path class="ramp" d="M534 102V86M548 84Q536 66 540 57Q552 46 562 60 566 76 556 88" />
                <path class="casing trunk" d={bukitTimah} />
                <path class="casing primary" d={queensway} />
                <path class="yellow trunk" d={bukitTimah} />
                <path class="yellow primary" d={queensway} />
                <path class="median" d="M111 259 237 302 309 324 442 372" />
                <path class="median" d="M468 384 555 439 637 492 693 531 745 541" />
                <path class="casing express" d={expressway} />
                <path class="orange" d={expressway} />
                <path class="border-line" d={expressway} />
                <path class="border-line" d={borders.join("")} />

                {#each stations as [x, y]}
                    <g transform="translate({x - 12} {y - 12})">
                        <rect width="24" height="24" rx="2" fill="#24a34c" />
                        <path d="M12 3Q5 3 5 10V16Q5 18 8 18H16Q19 18 19 16V10Q19 3 12 3Z" fill="#fff" />
                        <path d="M8 11Q8 7 12 7T16 11Z" fill="#24a34c" />
                        <circle cx="8.500" cy="15" r="1.500" fill="#24a34c" />
                        <circle cx="15.500" cy="15" r="1.500" fill="#24a34c" />
                        <path d="M8 18 6 22M16 18 18 22" stroke="#fff" stroke-width="2" />
                    </g>
                {/each}

                <rect x="466" y="16" width="41" height="22" rx="4" fill="#fff" stroke="#23272f" stroke-width="2" />
                <text class="shield" x="487" y="33" text-anchor="middle">PIE</text>

                <path id="turf" d="M237 18Q262 52 281 112" fill="none" />
                <text class="street"><textPath href="#turf">Turf Club Rd</textPath></text>
                <text class="street" transform="translate(561 34) rotate(-11)">Sime Rd</text>
                <text class="street" transform="translate(655 227) rotate(31)">Arcadia Rd</text>
                <text class="street" transform="translate(769 401) rotate(-65)">Adam R</text>
                <text class="street" transform="translate(0 230) rotate(19)">t Timah Rd</text>
                <text class="street" transform="translate(612 649) rotate(-51)">Queen's Rd</text>
                <text class="street" transform="translate(665 655) rotate(-42)">Farrer Rd</text>
                <text class="street" transform="translate(27 731) rotate(43)">Holland Rd</text>
                <text class="street" transform="translate(414 1117) rotate(-81)">Queensway</text>
                <text class="street" transform="translate(516 1248) rotate(35)">Margaret</text>

                <text class="district" x="202" y="361">BUKIT</text>
                <text class="district" x="202" y="387">TIMAH</text>
                <text class="district" x="368" y="1222">QUEENSTOWN</text>
                <text class="district end" x="51" y="1036">STER</text>
                <text class="district end" x="10" y="1061">L</text>
                <text class="district end" x="94" y="1149">PAL HILL</text>
                <text class="district start" x="745" y="1036">TAN</text>

                <text class="poi food" x="251" y="280">The Cavern</text>
                <path d="M245 239V244Q245 247 247 247V257M249 239V244Q249 247 247 247M247 239V247" fill="none" stroke="#b8481b" stroke-width="2" />
                <path d="M257 239V257H255V249H253Q253 241 257 239Z" fill="#b8481b" />
                <path d="M742 436V454M733 445H751" stroke="#9b3f60" stroke-width="5" />
                <text class="poi health" x="660" y="477">Adam Road Hosp</text>
                <circle cx="156" cy="1117" r="4" fill="#6b4c3e" />
                <text class="poi place" x="156" y="1148">Biopolis</text>
                <text class="poi garden" x="774" y="834">Si</text>
                <text class="poi garden" x="750" y="859">Botan</text>
            </svg>

            <div class="map-tools">
                <div class="tool-frame zoom">
                    <button type="button" aria-label="Zoom in">
                        <svg viewBox="0 0 16 16" width="16" height="16" stroke="#fff" stroke-width="4"><path d="M8 1V15M1 8H15" /></svg>
                    </button>
                    <button type="button" aria-label="Zoom out">
                        <svg viewBox="0 0 16 16" width="16" height="16" stroke="#fff" stroke-width="4"><path d="M1 8H15" /></svg>
                    </button>
                </div>
                <div class="tool-frame locate">
                    <button type="button" aria-label="My location">
                        <svg viewBox="0 0 28 28" width="28" height="28" fill="none" stroke="#fff" stroke-width="2" stroke-linejoin="round">
                            <path d="M26 1.500Q27.500 1 27 3L17 26Q16 28 14.500 26L13.500 14.500 2 13.500Q0 12.500 2 11.500Z" />
                        </svg>
                    </button>
                </div>
                <div class="tool-frame">
                    <button type="button" class="search" aria-label="Search place">
                        <svg viewBox="0 0 34 34" width="34" height="34" fill="none" stroke="#fff" stroke-width="2.200">
                            <circle cx="14" cy="14" r="12.500" />
                            <path d="M23 23 32 32" stroke-width="3.500" />
                            <path d="M14 21 10 15Q8 8 14 8T18 15Z" />
                            <circle cx="14" cy="12.500" r="1.500" />
                        </svg>
                    </button>
                </div>
            </div>
            <button type="button" class="layers" aria-label="Layers">
                <svg viewBox="0 0 42 42" width="42" height="42">
                    <path d="M2 22 19 38Q21 40 23 38L40 22V25L23 41Q21 42.500 19 41L2 25Z" fill="#3b6470" />
                    <path d="M2 17 19 34Q21 36 23 34L40 17V21L23 37.500Q21 39 19 37.500L2 21Z" fill="#fff" />
                    <path d="M19 1.500Q21 0 23 1.500L40 15.500Q42 17.500 40 19.500L23 34Q21 35.500 19 34L2 19.500Q0 17.500 2 15.500Z" fill="#50c3cf" />
                    <path d="M19 1.500Q21 0 23 1.500L36 12Q18 12 6 23L2 19.500Q0 17.500 2 15.500Z" fill="#6dced8" />
                </svg>
            </button>
        </section>
    </div>
</div>

<style>
    :global(body) {
        margin: 0;
    }

    .app {
        --blue: #3e4eae;
        --line: #cdd2d1;
        --ink: #1f2d2b;
        box-sizing: border-box;
        min-height: 100vh;
        display: flex;
        flex-direction: column;
        border: 1px solid #000;
        background: #fff;
        color: #333;
        font-family: Lato, "Liberation Sans", sans-serif;
        font-size: 26px;
        line-height: 32px;
    }

    .app :is(h1, h2, h3, p) {
        margin: 0;
        font-weight: 400;
    }

    .app :is(button, input, textarea) {
        box-sizing: border-box;
        margin: 0;
        font: inherit;
        color: inherit;
    }

    .app button {
        padding: 0;
        border: 0;
        background: none;
        cursor: pointer;
    }

    .app a {
        color: inherit;
        text-decoration: none;
    }

    svg {
        display: block;
        flex: none;
    }

    /* Top bar */
    .topbar {
        position: relative;
        z-index: 2;
        display: flex;
        align-items: center;
        height: 98px;
        padding-left: 15px;
        border-top: 2px solid #dfe1e5;
        background: #fff;
        box-shadow: 0 2px 8px rgb(0 0 0 / 25%);
    }

    .app .back {
        color: #7f8b89;
    }

    h1,
    h2 {
        color: var(--ink);
        font-size: 39px;
        line-height: 54px;
    }

    .app h1 {
        margin-left: 16px;
    }

    .main-nav {
        display: flex;
        gap: 32px;
        margin-left: auto;
        font-size: 29px;
        line-height: 34px;
    }

    .app .main-nav a {
        padding: 12px 0 11px;
        border-bottom: 2px solid transparent;
        color: #5d6967;
    }

    .app .main-nav .current,
    .app .tabs .current {
        border-bottom-color: var(--blue);
        color: var(--blue);
    }

    .app .user {
        margin-left: 16px;
        padding: 16px 32px 16px 24px;
        border-left: 2px solid var(--line);
    }

    /* Columns */
    .workspace {
        flex: 1;
        display: grid;
        grid-template-columns: 350px 384fr 480fr 397fr;
    }

    /* Page list */
    .sidebar {
        padding: 32px 32px 32px 0;
        background: #fafafa;
    }

    .page-card {
        box-sizing: border-box;
        display: flex;
        flex-direction: column;
        justify-content: space-between;
        height: 160px;
        margin-left: 34px;
        padding: 13px 14px 16px 15px;
        border: 2px solid var(--line);
        border-radius: 8px;
        background: #fff;
    }

    .page-title {
        color: var(--ink);
        font-size: 29px;
        line-height: 34px;
        white-space: nowrap;
    }

    .gear {
        align-self: flex-end;
        margin-right: 3px;
        color: #a8b0ae;
    }

    hr {
        height: 2px;
        margin: 16px 16px 16px 46px;
        border: 0;
        background: var(--line);
    }

    .page-slot {
        margin-bottom: 16px;
    }

    .active {
        position: relative;
    }

    .active::before {
        content: "";
        position: absolute;
        inset: 0 auto 0 14px;
        width: 2px;
        background: var(--blue);
    }

    .page-head {
        display: flex;
        justify-content: space-between;
    }

    .more {
        display: flex;
        align-items: center;
        height: 20px;
        flex: none;
    }

    .app .more {
        color: #7f8b89;
    }

    .app .page-head .more {
        margin: 6px 2px 0 0;
    }

    .page-foot {
        display: flex;
        align-items: flex-end;
        padding-left: 3px;
        color: #a8b0ae;
    }

    .count {
        margin-left: 20px;
        font-size: 31px;
        line-height: 38px;
    }

    .page-foot .file-icon {
        margin-left: auto;
    }

    .file-icon text {
        font-size: 30px;
    }

    .app .add-page {
        display: flex;
        align-items: center;
        justify-content: center;
        gap: 15px;
        width: calc(100% - 30px);
        height: 160px;
        margin: 32px 0 0 30px;
        border: 2px solid var(--blue);
        border-radius: 8px;
        background: #fff;
        color: var(--blue);
        font-size: 38px;
    }

    /* Element list */
    .elements {
        padding-top: 32px;
        border-right: 2px solid var(--line);
    }

    .panel-title {
        display: flex;
        gap: 22px;
        padding-left: 22px;
        color: #7f8b89;
    }

    .tabs {
        display: flex;
    }

    .app .tabs a {
        border-bottom: 2px solid transparent;
        color: #4a4a4a;
        line-height: 34px;
    }

    .page-tabs {
        gap: 64px;
        margin-top: 36px;
        padding-left: 32px;
        box-shadow: inset 0 -2px #dadada;
        font-size: 29px;
    }

    .page-tabs a {
        padding-bottom: 20px;
    }

    .cards {
        display: flex;
        flex-direction: column;
        gap: 24px;
        padding: 26px;
    }

    .card {
        display: flex;
        align-items: flex-start;
        padding: 24px 18px 24px 12px;
        border: 2px solid var(--line);
        border-radius: 10px;
        background: #fff;
    }

    .selected {
        box-shadow: 2px 4px 8px rgb(0 0 0 / 22%);
    }

    .grip {
        margin: 0 14px -14px 0;
    }

    .body {
        flex: 1;
    }

    .app .card .more {
        margin-left: 14px;
    }

    .app h3 {
        font-size: 38px;
        line-height: 42px;
        font-weight: 700;
        text-align: center;
    }

    .app .draw {
        display: flex;
        align-items: center;
        justify-content: center;
        gap: 16px;
        height: 58px;
        border-radius: 8px;
        background: var(--blue);
        color: #fff;
    }

    .app .tall {
        gap: 32px;
        height: 64px;
    }

    .app .route {
        padding-left: 40px;
    }

    .app .long {
        font-size: 25px;
    }

    .dots {
        display: flex;
        justify-content: space-between;
        padding: 8px 0 14px;
    }

    .dots span {
        width: 16px;
        height: 16px;
        border-radius: 50%;
        background: #6a98b5;
    }

    .question label {
        display: block;
        line-height: 36px;
        font-weight: 700;
    }

    .answer-box {
        position: relative;
        margin: 14px 0 34px;
    }

    .answer-box textarea {
        display: block;
        width: 100%;
        height: 188px;
        border: 2px solid #d8dada;
        border-radius: 6px;
        box-shadow: inset 0 2px 4px rgb(0 0 0 / 8%);
        resize: vertical;
    }

    .answer-box textarea::-webkit-resizer {
        background: none;
    }

    .answer-box svg {
        position: absolute;
        right: 3px;
        bottom: 3px;
        pointer-events: none;
    }

    .app .add-element {
        display: flex;
        align-items: center;
        justify-content: center;
        gap: 8px;
        height: 72px;
        margin-top: -8px;
        border: 2px solid var(--blue);
        border-radius: 6px;
        color: var(--blue);
        font-size: 32px;
    }

    /* Element settings */
    .inspector {
        border-right: 2px solid var(--line);
    }

    .inspector-head {
        display: flex;
        align-items: center;
        gap: 18px;
        padding: 46px 32px 48px;
    }

    .inspector-head h2 {
        font-size: 38px;
    }

    .app .close {
        margin-left: auto;
        color: #7c8886;
    }

    .tab-strip {
        display: flex;
        padding: 0 32px;
        border-top: 2px solid var(--line);
        box-shadow: inset 0 -2px #dadada;
    }

    .element-tabs {
        position: relative;
        gap: 62px;
    }

    .element-tabs a {
        padding: 13px 0 17px;
    }

    /* Frame that points out the three tabs */
    .element-tabs::after {
        content: "";
        position: absolute;
        inset: -23px -27px -23px -29px;
        border: 10px solid var(--blue);
        border-radius: 26px;
        pointer-events: none;
    }

    .form {
        padding: 36px 26px;
    }

    .label-row,
    .toggle-row {
        display: flex;
        align-items: center;
        gap: 13px;
        font-weight: 700;
    }

    .label-row {
        margin-bottom: 17px;
    }

    .spaced {
        margin-top: 35px;
    }

    .app .help {
        box-sizing: border-box;
        width: 26px;
        height: 26px;
        border: 2px solid #333;
        border-radius: 50%;
        font-size: 18px;
        line-height: 20px;
        text-align: center;
    }

    .app .text-input {
        width: 100%;
        height: 56px;
        padding: 0 14px;
        border: 2px solid #d8dada;
        border-radius: 6px;
        box-shadow: inset 0 2px 4px rgb(0 0 0 / 8%);
        font-family: Inter, sans-serif;
        font-size: 25px;
    }

    .color-group {
        display: flex;
        height: 58px;
        margin-bottom: 24px;
    }

    .swatch-cell,
    .app .hex {
        box-sizing: border-box;
        border: 2px solid #d8dada;
        box-shadow: inset 0 2px 4px rgb(0 0 0 / 8%);
    }

    .swatch-cell {
        display: flex;
        align-items: center;
        justify-content: center;
        width: 112px;
        border-radius: 6px 0 0 6px;
    }

    .app input[type="color"] {
        appearance: none;
        width: 72px;
        height: 26px;
        padding: 0;
        border: 0;
        background: none;
    }

    input[type="color"]::-webkit-color-swatch-wrapper {
        padding: 0;
    }

    input[type="color"]::-webkit-color-swatch {
        border: 2px solid #777;
        border-radius: 0;
    }

    .app .hex {
        width: 222px;
        margin-left: -2px;
        padding: 0;
        text-align: center;
    }

    .app .reset {
        display: flex;
        align-items: center;
        justify-content: center;
        width: 68px;
        border: 2px solid #a8b0ae;
        color: #a8b0ae;
    }

    .toggle-row {
        height: 40px;
        margin-bottom: 34px;
    }

    .toggle-row label {
        padding-bottom: 3px;
    }

    .toggle-row input {
        appearance: none;
        position: relative;
        width: 70px;
        height: 40px;
        border-radius: 20px;
        background: #b3b3b3;
    }

    .toggle-row input::before {
        content: "";
        position: absolute;
        top: 5px;
        left: 4px;
        width: 30px;
        height: 30px;
        border-radius: 50%;
        background: #f4f4f4;
        box-shadow: 0 3px 3px rgb(0 0 0 / 25%);
    }

    .tag {
        display: flex;
        align-items: center;
        gap: 24px;
        width: fit-content;
        height: 36px;
        margin-left: 6px;
        padding: 0 10px 0 16px;
        border-radius: 4px;
        background: #f5f5f5;
        color: #4a4a4a;
        font-size: 22px;
    }

    .counter {
        padding-top: 12px;
        font-size: 20px;
        line-height: 26px;
        text-align: right;
    }

    .weights {
        display: flex;
    }

    .app .weights button {
        width: 62px;
        height: 58px;
        margin-right: -2px;
        border: 2px solid #d8dada;
        font-family: "Liberation Serif", serif;
        font-size: 32px;
    }

    .app .weights button:first-child {
        border-radius: 6px 0 0 6px;
    }

    .app .weights .on {
        position: relative;
        border-color: var(--blue);
        background: var(--blue);
        color: #fff;
    }

    .weights .regular {
        -webkit-text-stroke: 1px currentColor;
    }

    .app .weights .bold {
        font-weight: 700;
        -webkit-text-stroke: 1px currentColor;
    }

    /* Map */
    .map {
        position: relative;
        overflow: hidden;
        background: #e5e4e1;
    }

    .map-canvas {
        position: absolute;
        inset: 0;
        width: 100%;
        height: 100%;
    }

    .map-canvas g path {
        vector-effect: non-scaling-stroke;
    }

    .park { fill: #b5e3a0; }
    .green { fill: #a7dd8c; }
    .grass { fill: #d3d8bf; }
    .sand { fill: #e7deb9; }
    .shade { fill: #dcd8d3; }
    .lake { fill: #70cff0; }

    .stream,
    .river,
    .lane,
    .avenue,
    .avenue-edge,
    .ramp,
    .casing,
    .yellow,
    .orange,
    .median,
    .border-line {
        fill: none;
        stroke-linejoin: round;
    }

    .stream { stroke: #8fcdee; stroke-width: 2px; }
    .river { stroke: #78c6f2; stroke-width: 4px; }
    .lane { stroke: #fff; stroke-width: 3px; }
    .avenue-edge { stroke: #d9daea; stroke-width: 14px; }
    .avenue { stroke: #fff; stroke-width: 11px; }
    .avenue-edge.wide { stroke-width: 19px; }
    .avenue.wide { stroke-width: 16px; }
    .ramp { stroke: #fda162; stroke-width: 3px; }
    .casing { stroke: #fff; }
    .yellow { stroke: #f7d070; }
    .yellow.trunk { stroke-width: 21px; }
    .casing.trunk { stroke-width: 25px; }
    .yellow.primary { stroke-width: 16px; }
    .casing.primary { stroke-width: 20px; }
    .median { stroke: #fbe9b8; stroke-width: 2px; }
    .casing.express { stroke-width: 19px; }
    .orange { stroke: #fda162; stroke-width: 16px; }
    .border-line { stroke: #9497aa; stroke-width: 2px; stroke-dasharray: 12 5; }

    .map-canvas text {
        font-family: Roboto, "Open Sans", sans-serif;
        font-size: 19px;
        paint-order: stroke;
        stroke: #fff;
        stroke-width: 3px;
        stroke-linejoin: round;
        fill: #23272f;
    }

    .map-canvas .shield {
        font-size: 16px;
        font-weight: 700;
    }

    .map-canvas .district {
        font-family: "Noto Sans", sans-serif;
        font-size: 24px;
        text-anchor: middle;
        fill: #5c6890;
    }

    .map-canvas .district.end { text-anchor: end; }
    .map-canvas .district.start { text-anchor: start; }

    .map-canvas .poi {
        font-size: 18px;
        font-weight: 500;
    }

    .map-canvas .food { text-anchor: middle; fill: #b8481b; }
    .map-canvas .place { text-anchor: middle; fill: #6b4c3e; }
    .map-canvas .health { fill: #9b3f60; }
    .map-canvas .garden { fill: #4a7350; }

    .map-tools {
        position: absolute;
        top: 14px;
        left: 14px;
        display: flex;
        flex-direction: column;
        align-items: flex-start;
        gap: 2px;
    }

    .tool-frame {
        padding: 4px;
        border-radius: 6px;
        background: rgb(255 255 255 / 40%);
    }

    .locate {
        margin-top: 46px;
    }

    .app .tool-frame button {
        display: flex;
        align-items: center;
        justify-content: center;
        width: 40px;
        height: 40px;
        border-radius: 2px;
        background: rgb(16 74 151 / 52%);
    }

    .app .zoom button {
        height: 42px;
    }

    .app .tool-frame .search {
        width: 46px;
        height: 46px;
    }

    .app .layers {
        position: absolute;
        top: 16px;
        right: 10px;
        padding: 10px;
        border: 4px solid rgb(255 255 255 / 40%);
        border-radius: 8px;
        background: #fff;
        background-clip: padding-box;
    }
</style>
